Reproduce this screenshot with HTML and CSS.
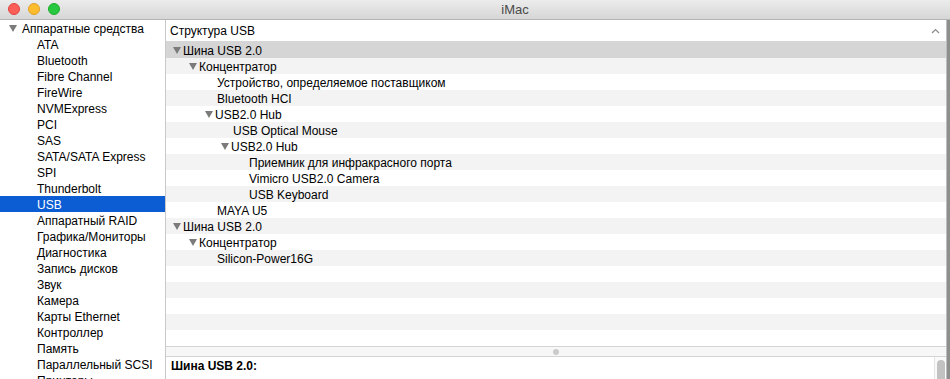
FILE: index.html
```html
<!DOCTYPE html>
<html lang="ru">
<head>
<meta charset="utf-8">
<title>iMac</title>
<link rel="stylesheet" href="styles.css">
</head>
<body>
<div class="window">
  <div class="titlebar">
    <div class="lights">
      <span class="light red"></span>
      <span class="light yellow"></span>
      <span class="light green"></span>
    </div>
    <div class="title">iMac</div>
  </div>
  <div class="content">
    <div class="sidebar">
      <div class="sitem group"><svg class="tri" viewBox="0 0 8 7"><polygon points="0,0 8,0 4,7"/></svg>Аппаратные средства</div>
      <div class="sitem">ATA</div>
      <div class="sitem">Bluetooth</div>
      <div class="sitem">Fibre Channel</div>
      <div class="sitem">FireWire</div>
      <div class="sitem">NVMExpress</div>
      <div class="sitem">PCI</div>
      <div class="sitem">SAS</div>
      <div class="sitem">SATA/SATA Express</div>
      <div class="sitem">SPI</div>
      <div class="sitem">Thunderbolt</div>
      <div class="sitem selected">USB</div>
      <div class="sitem">Аппаратный RAID</div>
      <div class="sitem">Графика/Мониторы</div>
      <div class="sitem">Диагностика</div>
      <div class="sitem">Запись дисков</div>
      <div class="sitem">Звук</div>
      <div class="sitem">Камера</div>
      <div class="sitem">Карты Ethernet</div>
      <div class="sitem">Контроллер</div>
      <div class="sitem">Память</div>
      <div class="sitem">Параллельный SCSI</div>
      <div class="sitem">Принтеры</div>
    </div>
    <div class="main">
      <div class="header">
        <span>Структура USB</span>
        <svg class="chev" viewBox="0 0 9 6"><polyline points="1,5 4.5,1.5 8,5"/></svg>
      </div>
      <div class="tree">
        <div class="row sel l0"><svg class="tri" viewBox="0 0 8 7"><polygon points="0,0 8,0 4,7"/></svg>Шина USB 2.0</div>
        <div class="row l1"><svg class="tri" viewBox="0 0 8 7"><polygon points="0,0 8,0 4,7"/></svg>Концентратор</div>
        <div class="row leaf l2">Устройство, определяемое поставщиком</div>
        <div class="row leaf l2">Bluetooth HCI</div>
        <div class="row l2"><svg class="tri" viewBox="0 0 8 7"><polygon points="0,0 8,0 4,7"/></svg>USB2.0 Hub</div>
        <div class="row leaf l3">USB Optical Mouse</div>
        <div class="row l3"><svg class="tri" viewBox="0 0 8 7"><polygon points="0,0 8,0 4,7"/></svg>USB2.0 Hub</div>
        <div class="row leaf l4">Приемник для инфракрасного порта</div>
        <div class="row leaf l4">Vimicro USB2.0 Camera</div>
        <div class="row leaf l4">USB Keyboard</div>
        <div class="row leaf l2">MAYA U5</div>
        <div class="row l0"><svg class="tri" viewBox="0 0 8 7"><polygon points="0,0 8,0 4,7"/></svg>Шина USB 2.0</div>
        <div class="row l1"><svg class="tri" viewBox="0 0 8 7"><polygon points="0,0 8,0 4,7"/></svg>Концентратор</div>
        <div class="row leaf l2">Silicon-Power16G</div>
        <div class="row"></div>
        <div class="row"></div>
        <div class="row"></div>
        <div class="row"></div>
        <div class="row"></div>
      </div>
      <div class="splitter"><span class="dot"></span></div>
      <div class="detail">
        <div class="detail-title">Шина USB 2.0:</div>
        <div class="vscroll"><div class="thumb"></div></div>
      </div>
    </div>
    <div class="edge"></div>
  </div>
</div>
</body>
</html>
```

FILE: styles.css
```css
* { box-sizing: border-box; }
html, body {
  margin: 0;
  padding: 0;
  width: 950px;
  height: 379px;
  overflow: hidden;
  background: #ffffff;
  font-family: "Liberation Sans", Arial, sans-serif;
  font-size: 12px;
  color: #000;
}
.window {
  display: flex;
  flex-direction: column;
  width: 950px;
  height: 379px;
}
.titlebar {
  height: 20px;
  flex: 0 0 20px;
  display: flex;
  align-items: center;
  background: linear-gradient(#ececec, #d6d6d6);
  border-bottom: 1px solid #b4b4b4;
}
.lights {
  display: flex;
  gap: 8px;
  padding-left: 8px;
  margin-top: -1px;
}
.light {
  width: 12px;
  height: 12px;
  border-radius: 50%;
  display: block;
}
.red { background: #fc5f57; border: 1px solid #e0443e; }
.yellow { background: #fdbc2e; border: 1px solid #dea123; }
.green { background: #28c840; border: 1px solid #1dad2b; }
.title {
  flex: 1;
  text-align: center;
  padding-left: 20px;
  font-size: 13px;
  color: #4a4a4a;
  margin-top: -1px;
}
.content {
  flex: 1;
  display: flex;
  min-height: 0;
}
.sidebar {
  width: 166px;
  flex: 0 0 166px;
  border-right: 1px solid #c9c9c9;
  background: #fff;
  overflow: hidden;
}
.sitem {
  height: 16px;
  line-height: 16px;
  padding-top: 1px;
  padding-left: 37px;
  white-space: nowrap;
}
.sitem.group {
  padding-left: 9px;
  display: flex;
  align-items: center;
}
.sitem.group .tri { margin-right: 5px; margin-top: -1px; }
.sitem.selected {
  background: #0c5dd4;
  color: #fff;
}
.tri {
  width: 8px;
  height: 7px;
  fill: #7b7b7b;
  flex: 0 0 8px;
}
.main {
  flex: 1;
  display: flex;
  flex-direction: column;
  min-width: 0;
}
.header {
  height: 22px;
  flex: 0 0 22px;
  display: flex;
  align-items: center;
  justify-content: space-between;
  padding: 0 6px 0 4px;
  border-bottom: 1px solid #d6d6d6;
  background: #fff;
}
.chev {
  width: 9px;
  height: 6px;
  fill: none;
  stroke: #8a8a8a;
  stroke-width: 1.2;
}
.tree {
  flex: 0 0 304px;
  display: flex;
  flex-direction: column;
}
.row {
  height: 16px;
  flex: 0 0 16px;
  display: flex;
  align-items: center;
  padding-top: 1px;
  white-space: nowrap;
  background: #fff;
}
.row:nth-child(even) { background: #f3f3f3; }
.row.sel { background: #d5d5d5; }
.row .tri { margin-right: 2px; margin-top: -1px; }
.l0 { padding-left: 7px; }
.l1 { padding-left: 23px; }
.l2 { padding-left: 39px; }
.l3 { padding-left: 55px; }
.leaf.l2 { padding-left: 51px; }
.leaf.l3 { padding-left: 67px; }
.leaf.l4 { padding-left: 83px; }
.splitter {
  height: 11px;
  flex: 0 0 11px;
  border-top: 1px solid #d4d4d4;
  border-bottom: 1px solid #d4d4d4;
  background: #f7f7f7;
  display: flex;
  align-items: center;
  justify-content: center;
}
.dot {
  width: 6px;
  height: 6px;
  border-radius: 50%;
  background: #cbcbcb;
  display: block;
}
.detail {
  flex: 1;
  display: flex;
  background: #fff;
}
.detail-title {
  flex: 1;
  font-weight: bold;
  padding: 2px 0 0 5px;
}
.vscroll {
  width: 12px;
  flex: 0 0 12px;
  border-left: 1px solid #e4e4e4;
  background: #fafafa;
  padding: 3px 1px 0 2px;
}
.thumb {
  height: 40px;
  border-radius: 4px;
  background: #c2c2c2;
}
.edge {
  width: 4px;
  flex: 0 0 4px;
  border-left: 1px solid #bdbdbd;
  background: #8e8e8e;
}
```
